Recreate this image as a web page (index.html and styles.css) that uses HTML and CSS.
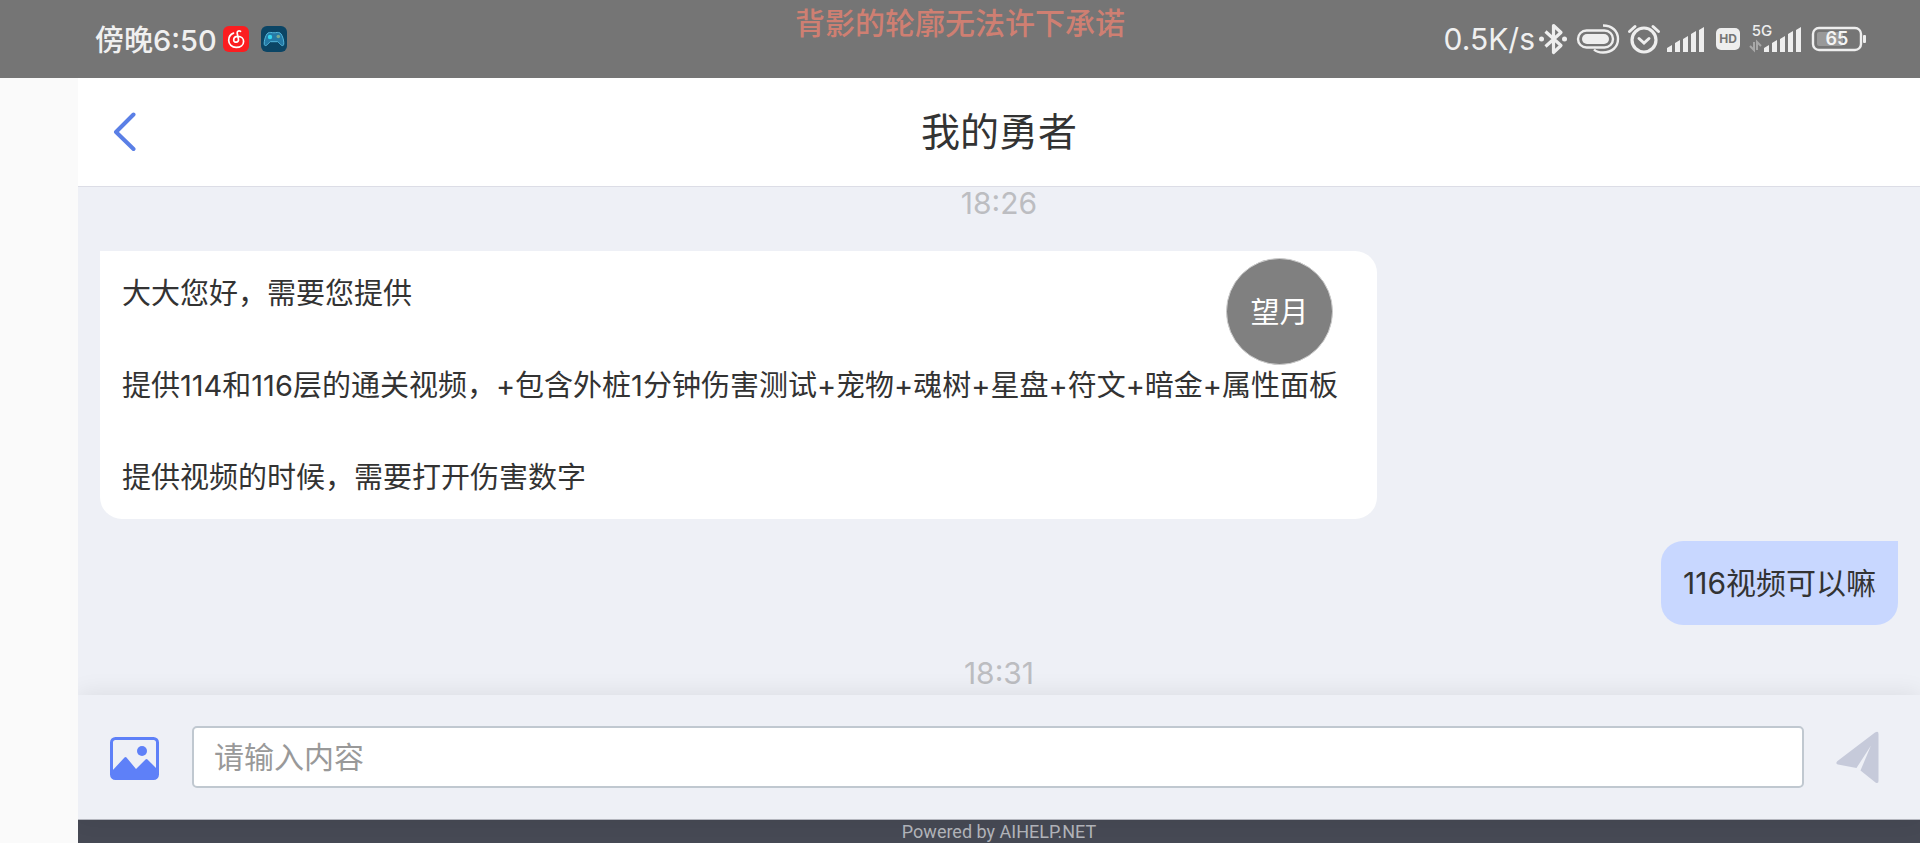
FILE: index.html
```html
<!DOCTYPE html>
<html lang="zh-CN">
<head>
<meta charset="utf-8">
<meta name="viewport" content="width=device-width, initial-scale=1">
<title>我的勇者</title>
<link rel="stylesheet" href="styles.css">
</head>
<body>
<div class="screen">
  <div class="status">
    <div class="status-left">
      <span class="clock">傍晚6:50</span>
      <svg class="app-icon" viewBox="0 0 26 26" aria-hidden="true">
        <rect width="26" height="26" rx="6" fill="#fb1d20"/>
        <path d="M17.500 5.300c-2-1-3.700.1-3.300 1.900l1.300 6.200c.5 3.400-4.700 3.900-4.800.5 0-2.200 1.800-3.500 4.200-3.500 3.400 0 5.700 2.200 5.700 5 0 3.600-3.200 6-7.400 6-4.300 0-7.500-3-7.500-7.200 0-3.400 1.900-6 4.800-7.100" fill="none" stroke="#fff" stroke-width="1.700" stroke-linecap="round"/>
      </svg>
      <svg class="app-icon" viewBox="0 0 26 26" aria-hidden="true">
        <rect width="26" height="26" rx="6" fill="#0b4565"/>
        <path d="M7 7c2-1.200 3.500-.2 6-.2s4-1 6 .2c2.500 1.300 4.900 10.500 3.300 12.300-1.800 1.300-3.900-2.300-5.600-3.600H9.300C7.600 17 5.500 20.600 3.700 19.300 2.100 18 4.500 8.300 7 7z" fill="#2479a5" stroke="#54b7dc" stroke-width="1"/>
        <circle cx="9" cy="11" r="2.200" fill="#35d5ef"/>
        <circle cx="17.300" cy="10.500" r="1.800" fill="#7ba98f"/>
      </svg>
    </div>
    <div class="lyric">背影的轮廓无法许下承诺</div>
    <div class="status-right">
      <span class="speed">0.5K/s</span>
      <svg class="sys" width="37" height="32" viewBox="0 0 37 32" aria-hidden="true">
        <path d="M10.500 8.500 26 22.500l-7.500 7V2.500L26 9.500 10.500 23.500" fill="none" stroke="#eee" stroke-width="3.200" stroke-linejoin="round"/>
        <circle cx="6.500" cy="16" r="2.500" fill="#eee"/><circle cx="29.500" cy="16" r="2.500" fill="#eee"/>
      </svg>
      <svg class="sys" width="52" height="32" viewBox="0 0 52 32" aria-hidden="true">
        <rect x="6" y="7.500" width="35" height="17" rx="8.500" fill="none" stroke="#eee" stroke-width="2.400"/>
        <rect x="10" y="11" width="27" height="10" rx="5" fill="#eee"/>
        <path d="M31 2.500c9 0 15 5.500 15 13.500s-6 13.500-15 13.500c-4 0-7-1-9-3" fill="none" stroke="#eee" stroke-width="2.400"/>
      </svg>
      <svg class="sys" width="40" height="32" viewBox="0 0 40 32" aria-hidden="true">
        <circle cx="20" cy="17" r="12" fill="none" stroke="#eee" stroke-width="3.200"/>
        <path d="m15 15.500 5 4.500 5-4.500M5.500 8.500 11 3.500M34.500 8.500 29 3.500" fill="none" stroke="#eee" stroke-width="3" stroke-linecap="round"/>
      </svg>
      <svg class="sys" width="46" height="32" viewBox="0 0 46 32" aria-hidden="true">
        <path d="M3 29v-4l5-3v7zM11 29V20l5-3v12zM19 29V16l5-3v16zM27 29V11l5-3v21zM35 29V7l5-3v25z" fill="#eee"/>
      </svg>
      <svg class="sys" width="35" height="32" viewBox="0 0 35 32" role="img" aria-label="HD">
        <rect x="6" y="5" width="24" height="22" rx="5" fill="#eee"/>
        <text x="18" y="20" class="t-hd">HD</text>
      </svg>
      <svg class="sys" width="62" height="32" viewBox="0 0 62 32" role="img" aria-label="5G">
        <text x="17" y="13" class="t-5g">5G</text>
        <path d="M5 23l4 4V19M16 23l-4-4v8" fill="none" stroke="#a8a8a8" stroke-width="2"/>
        <path d="M19 29v-4l5-3v7zM27 29V20l5-3v12zM35 29V16l5-3v16zM43 29V11l5-3v21zM51 29V7l5-3v25z" fill="#eee"/>
      </svg>
      <svg class="sys" width="63" height="32" viewBox="0 0 63 32" role="img" aria-label="65">
        <rect x="6" y="5" width="48" height="22" rx="6" fill="none" stroke="#eee" stroke-width="2.400"/>
        <rect x="10" y="9" width="26" height="14" rx="2" fill="#999"/>
        <rect x="56" y="12" width="3" height="8" rx="1" fill="#eee"/>
        <text x="30" y="22" class="t-bat">65</text>
      </svg>
    </div>
  </div>

  <div class="app">
    <header class="header">
      <button class="back" type="button" aria-label="返回">
        <svg width="24" height="40" viewBox="0 0 24 40" aria-hidden="true"><path d="M20.500 2.500 3 20 20.500 37" fill="none" stroke="#5a7fe6" stroke-width="4" stroke-linecap="round" stroke-linejoin="round"/></svg>
      </button>
      <h1 class="title">我的勇者</h1>
    </header>

    <main class="chat">
      <time class="time">18:26</time>
      <div class="bubble bubble-in">
        <p>大大您好，需要您提供</p>
        <p>提供114和116层的通关视频，+包含外桩1分钟伤害测试+宠物+魂树+星盘+符文+暗金+属性面板</p>
        <p>提供视频的时候，需要打开伤害数字</p>
      </div>
      <div class="bubble bubble-out"><p>116视频可以嘛</p></div>
      <time class="time">18:31</time>
    </main>

    <form class="composer">
      <button class="icon-btn" type="button" aria-label="图片">
        <svg width="50" height="48" viewBox="0 -4 50 48" aria-hidden="true">
          <rect x="1.500" y="1.500" width="46" height="40" rx="4" fill="none" stroke="#5e80f8" stroke-width="3"/>
          <path d="M2 34 14.500 20.500q1-1 2 0L26 32l9.500-9.500q1-1 2 0L48 33v5q0 4-4 4H6q-4 0-4-4z" fill="#5e80f8"/>
          <circle cx="32" cy="14" r="5" fill="#5e80f8"/>
        </svg>
      </button>
      <input class="field" type="text" placeholder="请输入内容" aria-label="请输入内容">
      <button class="icon-btn" type="submit" aria-label="发送">
        <svg width="43" height="53" viewBox="0 0 43 53" aria-hidden="true">
          <path d="M39 1.500q3.500-2 3.500 1.500v47q0 3-3 1.500L24.500 39.500 35 14.500 20.500 37 2 33.500q-3-1-.5-3.500z" fill="#c6cada"/>
        </svg>
      </button>
    </form>
    <footer class="footer">Powered by AIHELP.NET</footer>
  </div>
  <button class="floating" type="button">望月</button>
</div>
</body>
</html>
```
FILE: styles.css
```css
* { box-sizing: border-box; }
body {
  margin: 0;
  font-family: Inter, "Noto Sans CJK SC", sans-serif;
  font-size: 30px;
  color: #333;
  background: #fafafa;
}
button { padding: 0; border: 0; background: none; font: inherit; color: inherit; }
svg { display: block; flex: none; }
p, h1 { margin: 0; font-weight: 400; }

.screen { position: relative; display: flex; flex-direction: column; min-height: 100vh; }

.status {
  display: grid;
  grid-template-columns: 1fr auto 1fr;
  flex: none;
  height: 78px;
  padding: 0 50px;
  background: #757575;
  color: #f0f0f0;
}
.status-left, .status-right { display: flex; align-items: center; }
.status-left { gap: 12px; padding-left: 45px; }
.status-right { justify-content: flex-end; }
.clock { margin-right: -6px; padding-bottom: 2px; font-size: 29px; font-weight: 500; }
.speed { font-size: 30px; }
.app-icon { width: 26px; height: 26px; }
.lyric { line-height: 46px; font-weight: 500; color: #cf7f72; }
.sys { overflow: visible; }
.sys text { text-anchor: middle; font-family: Inter, sans-serif; }
.t-hd { font-size: 12px; font-weight: 700; fill: #757575; }
.t-5g { font-size: 15px; font-weight: 500; fill: #eee; }
.t-bat { font-size: 18px; font-weight: 600; fill: #f4f4f4; }

.app {
  display: flex;
  flex: 1;
  flex-direction: column;
  margin-left: 78px;
  background: #eef0f6;
  overflow: hidden;
}

.header {
  display: grid;
  grid-template-columns: 60px 1fr 60px;
  align-items: center;
  flex: none;
  height: 109px;
  padding: 0 35px;
  border-bottom: 1px solid #dcdde6;
  background: #fff;
}
.title { font-size: 39px; line-height: 56px; text-align: center; }

.chat {
  display: flex;
  flex: 1;
  flex-direction: column;
  gap: 22px;
  padding: 0 22px;
}
.time { flex: none; align-self: center; margin: 10px 0 6px; line-height: 32px; color: #bcbdc1; }
.time:first-child { margin: 0 0 10px; }
.bubble { flex: none; padding: 19px 22px; border-radius: 22px; line-height: 46px; }
.bubble-in {
  display: flex;
  flex-direction: column;
  gap: 46px;
  align-self: flex-start;
  width: 71%;
  padding: 20px 22px 18px;
  border-top-left-radius: 0;
  background: #fff;
  font-size: 29px;
}
.bubble-out { align-self: flex-end; border-top-right-radius: 0; background: #c8d7ff; }

.composer {
  position: relative;
  display: flex;
  flex: none;
  align-items: center;
  gap: 32px;
  height: 125px;
  padding: 0 41px 0 32px;
  border-bottom: 1px solid #b4b6be;
  background: #eef0f6;
  box-shadow: 0 -2px 22px rgba(0, 0, 0, 0.08);
}
.field {
  flex: 1;
  min-width: 0;
  height: 62px;
  padding: 0 20px;
  border: 2px solid #c0c8d0;
  border-radius: 5px;
  background: #fff;
  font: inherit;
  color: #333;
}
.field::placeholder { color: #999; opacity: 1; }

.footer {
  flex: none;
  height: 23px;
  background: #464954;
  color: #b2b4ba;
  font-family: Roboto, sans-serif;
  font-size: 18px;
  line-height: 23px;
  text-align: center;
}

.floating {
  position: absolute;
  top: 258px;
  left: 1226px;
  width: 107px;
  height: 107px;
  padding-bottom: 4px;
  border: 1px solid #ccc;
  border-radius: 50%;
  background: #808080;
  color: #fff;
  font-size: 29px;
}
```
